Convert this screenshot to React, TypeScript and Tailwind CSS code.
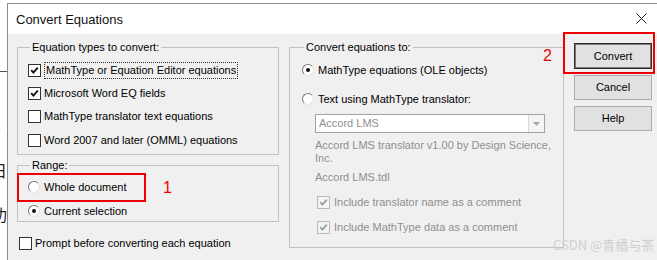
import React from "react"

// Convert Equations dialog (MathType), Windows-style

function Check({ checked, disabled }: { checked?: boolean; disabled?: boolean }) {
  return (
    <span
      className={
        disabled
          ? "w-[13px] h-[13px] shrink-0 border border-[#b9b9b9] bg-[#f4f4f4] flex items-center justify-center"
          : "w-[13px] h-[13px] shrink-0 border border-[#333333] bg-white flex items-center justify-center"
      }
    >
      {checked && (
        <svg width="9" height="9" viewBox="0 0 9 9">
          <path
            d="M1.2 4.2 L3.4 6.6 L7.8 1.6"
            fill="none"
            stroke={disabled ? "#a0a0a0" : "#111111"}
            strokeWidth="1.9"
          />
        </svg>
      )}
    </span>
  )
}

function Radio({ checked }: { checked?: boolean }) {
  return (
    <span className="w-[12px] h-[12px] shrink-0 rounded-full border border-t-[#7a7a7a] border-l-[#7a7a7a] border-r-[#e3e3e3] border-b-[#e3e3e3] bg-white flex items-center justify-center">
      {checked && <span className="w-[4px] h-[4px] rounded-full bg-[#111111]" />}
    </span>
  )
}

function Row({ children, className }: { children: React.ReactNode; className?: string }) {
  return <div className={"flex items-center gap-[3px] h-[16px] whitespace-nowrap " + (className ?? "")}>{children}</div>
}

export default function App() {
  return (
    <div className="relative w-[657px] h-[260px] bg-white flex overflow-hidden font-['Liberation_Sans',sans-serif] text-[11px] leading-[13px] text-black">
      {/* document behind the dialog */}
      <div className="w-[7px] shrink-0 flex flex-col overflow-hidden text-[#222] font-['Noto_Sans_CJK_SC',sans-serif] text-[16px] leading-[20px]">
        <div className="h-[72px] border-b border-[#555] w-[7px]" />
        <div className="ml-[-6px] mt-[52px]">/</div>
        <div className="ml-[-9px] mt-[16px]">日</div>
        <div className="ml-[-9px] mt-[24px]">功</div>
      </div>

      {/* dialog window */}
      <div className="flex-1 min-w-0 mt-[3px] flex flex-col border-l border-t border-[#8c8c8c]">
        <div className="h-[30px] shrink-0 bg-white flex items-center justify-between pl-[8px] pr-[10px]">
          <span className="font-['Liberation_Sans',sans-serif] text-[13px] text-[#111]">Convert Equations</span>
          <svg width="11" height="11" viewBox="0 0 11 11" className="mt-[-1px]">
            <path d="M0.5 0.5 L10.5 10.5 M10.5 0.5 L0.5 10.5" stroke="#222" strokeWidth="1" />
          </svg>
        </div>

        <div className="flex-1 bg-[#f0f0f0] flex pl-[9px] pt-[7px]">
          {/* left column */}
          <div className="w-[262px] shrink-0 flex flex-col">
            <fieldset className="min-w-0 border border-[#c2c2c2] px-[10px] pb-[6px]">
              <legend className="ml-[2px] px-[2px]">Equation types to convert:</legend>
              <div className="flex flex-col gap-[7px] pt-[8px]">
                <Row>
                  <Check checked />
                  <span className="border border-dotted border-[#333] px-[1px] h-[17px] flex items-center">
                    MathType or Equation Editor equations
                  </span>
                </Row>
                <Row>
                  <Check checked />
                  <span>Microsoft Word EQ fields</span>
                </Row>
                <Row>
                  <Check />
                  <span>MathType translator text equations</span>
                </Row>
                <Row className="mt-[1px]">
                  <Check />
                  <span>Word 2007 and later (OMML) equations</span>
                </Row>
              </div>
            </fieldset>

            <fieldset className="min-w-0 mt-[4px] border border-[#c2c2c2] px-[10px] pb-[2px]">
              <legend className="ml-[2px] px-[2px]">Range:</legend>
              <div className="flex flex-col gap-[8px] pt-[7px]">
                <Row className="gap-[4px]">
                  <Radio />
                  <span>Whole document</span>
                </Row>
                <Row className="gap-[4px]">
                  <Radio checked />
                  <span>Current selection</span>
                </Row>
              </div>
            </fieldset>

            <Row className="mt-[13px] ml-[2px] gap-[2px]">
              <Check />
              <span>Prompt before converting each equation</span>
            </Row>
          </div>

          {/* right group */}
          <fieldset className="min-w-0 shrink-0 ml-[10px] w-[275px] h-[207px] border border-[#c2c2c2] pl-[12px] pr-[8px]">
            <legend className="ml-[2px] px-[2px]">Convert equations to:</legend>
            <div className="flex flex-col pt-[8px]">
              <Row className="gap-[4px]">
                <Radio checked />
                <span>MathType equations (OLE objects)</span>
              </Row>
              <Row className="gap-[4px] mt-[13px]">
                <Radio />
                <span>Text using MathType translator:</span>
              </Row>
              <div className="ml-[13px] flex flex-col text-[#8f8f8f]">
                <div className="mt-[7px] h-[19px] w-[230px] border border-[#a3a3a3] bg-white flex items-center justify-between">
                  <span className="pl-[3px]">Accord LMS</span>
                  <span className="w-[16px] h-[17px] bg-[#f4f4f4] border-l border-[#dadada] flex items-center justify-center">
                    <svg width="7" height="4" viewBox="0 0 7 4">
                      <path d="M0 0 L7 0 L3.5 4 Z" fill="#a6a6a6" />
                    </svg>
                  </span>
                </div>
                <div className="mt-[6px] leading-[13px] whitespace-nowrap">
                  Accord LMS translator v1.00 by Design Science,
                  <br />
                  Inc.
                </div>
                <div className="mt-[6px]">Accord LMS.tdl</div>
                <Row className="mt-[10px] ml-[2px] gap-[4px]">
                  <Check checked disabled />
                  <span>Include translator name as a comment</span>
                </Row>
                <Row className="mt-[9px] ml-[2px] gap-[4px]">
                  <Check checked disabled />
                  <span>Include MathType data as a comment</span>
                </Row>
              </div>
            </div>
          </fieldset>

          {/* buttons */}
          <div className="ml-[10px] mt-[2px] flex flex-col gap-[6px] w-[78px] shrink-0">
            <button className="h-[26px] bg-[#e1e1e1] border border-[#2b2b2b] shadow-[inset_0_0_0_1px_#7a7a7a]">
              Convert
            </button>
            <button className="h-[25px] bg-[#e1e1e1] border border-[#adadad]">Cancel</button>
            <button className="h-[25px] bg-[#e1e1e1] border border-[#adadad]">Help</button>
          </div>
        </div>
      </div>

      {/* annotations drawn over the screenshot */}
      <div className="absolute left-[17px] top-[173px] w-[129px] h-[29px] border-2 border-[#ee0000]" />
      <span className="absolute left-[163px] top-[179px] text-[16px] leading-[18px] text-[#ee0000]">1</span>
      <div className="absolute left-[563px] top-[32px] w-[92px] h-[42px] border-2 border-[#ee0000]" />
      <span className="absolute left-[543px] top-[47px] text-[16px] leading-[18px] text-[#ee0000]">2</span>
      <span className="absolute left-[553px] top-[237px] text-[13px] leading-[16px] text-[#cfcfcf] font-['Noto_Sans_CJK_SC',sans-serif]">
        CSDN @青橘与茶
      </span>
    </div>
  )
}
